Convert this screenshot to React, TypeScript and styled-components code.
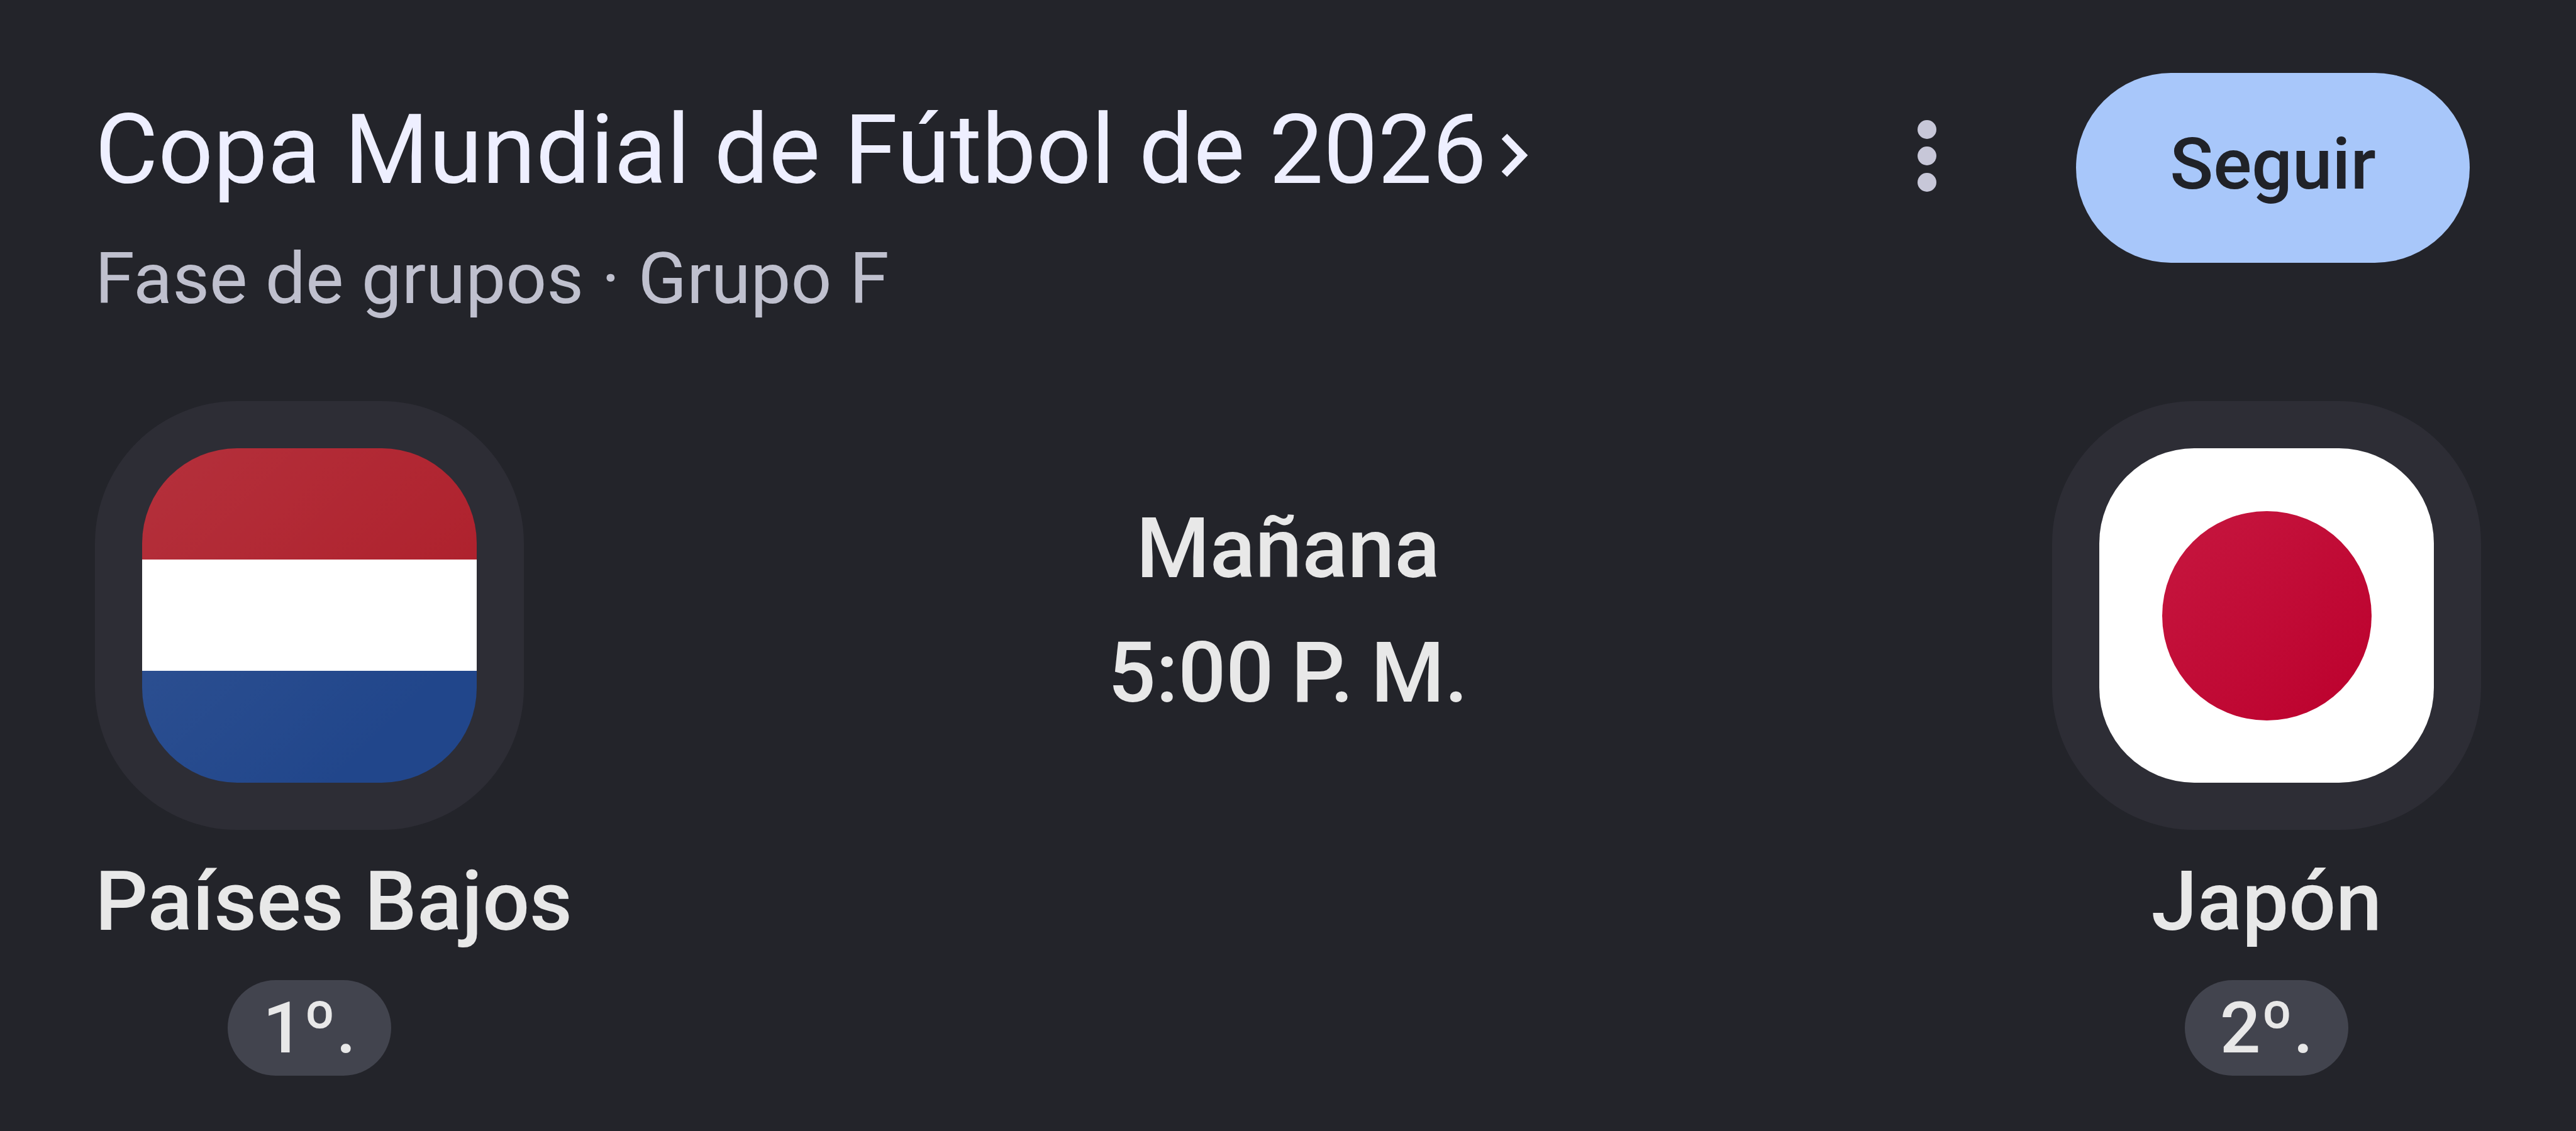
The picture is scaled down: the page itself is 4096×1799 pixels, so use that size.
import React from 'react';
import styled, { createGlobalStyle, css } from 'styled-components';

const colors = {
  page: '#23242a',
  tile: '#2d2d35',
  pill: '#42444e',
  accent: '#a8c7fa',
  onAccent: '#202228',
  title: '#eeefff',
  muted: '#bfc0ce',
  dots: '#c7c7d8',
  text: '#e8e8e8',
};

const GlobalStyle = createGlobalStyle`
  *, *::before, *::after { box-sizing: border-box; }
  body {
    margin: 0;
    background: ${colors.page};
    font-family: Roboto, "Liberation Sans", sans-serif;
  }
`;

const Card = styled.main`
  min-height: 100vh;
  padding: 116px 151px 87px;
  color: ${colors.text};
`;

const Header = styled.header`
  display: flex;
  justify-content: space-between;
  align-items: flex-start;
  margin-bottom: 127px;
`;

const Heading = styled.div`
  display: flex;
  flex-direction: column;
  gap: 44px;
  padding-top: 31px;
`;

const Title = styled.h1`
  margin: 0;
  font-size: 154px;
  font-weight: 400;
  line-height: 184px;
`;

const TitleLink = styled.a`
  display: inline-flex;
  align-items: center;
  gap: 24px;
  color: ${colors.title};
  text-decoration: none;
  white-space: nowrap;
`;

const Chevron = styled.svg`
  width: 44px;
  height: 72px;
  margin-top: 16px;
  fill: none;
  stroke: currentColor;
  stroke-width: 12;
`;

const Stage = styled.p`
  margin: 0;
  color: ${colors.muted};
  font-size: 114px;
  line-height: 136px;
`;

const Actions = styled.div`
  display: flex;
  align-items: flex-start;
  gap: 177px;
  padding-right: 18px;
`;

const MoreButton = styled.button`
  display: flex;
  align-items: center;
  justify-content: center;
  width: 120px;
  height: 264px;
  padding: 0;
  border: 0;
  background: none;
  color: ${colors.dots};
  cursor: pointer;
`;

const DotsIcon = styled.svg`
  width: 30px;
  height: 116px;
  fill: currentColor;
`;

const FollowButton = styled.button`
  width: 626px;
  height: 302px;
  padding: 0 0 12px;
  border: 0;
  border-radius: 151px;
  background: ${colors.accent};
  color: ${colors.onAccent};
  font-family: inherit;
  font-size: 114px;
  font-weight: 500;
  line-height: 136px;
  cursor: pointer;
`;

const Match = styled.section`
  display: grid;
  grid-template-columns: 682px 1fr 682px;
`;

const Team = styled.div`
  display: flex;
  flex-direction: column;
  align-items: center;
`;

const Tile = styled.div`
  width: 100%;
  aspect-ratio: 1;
  padding: 75px;
  border-radius: 226px;
  background: ${colors.tile};
`;

const flagStyles = {
  nl: css`
    background:
      linear-gradient(135deg, rgba(255, 255, 255, 0.08), transparent 80%),
      linear-gradient(#ae1f2b 0 33.3%, #ffffff 33.3% 66.6%, #21468b 66.6%);
  `,
  jp: css`
    background: #ffffff;
  `,
};

const Flag = styled.div<{ $country: 'nl' | 'jp' }>`
  display: flex;
  align-items: center;
  justify-content: center;
  height: 100%;
  border-radius: 151px;
  ${({ $country }) => flagStyles[$country]}
`;

const SunDisc = styled.div`
  width: 333px;
  height: 333px;
  border-radius: 50%;
  background: linear-gradient(135deg, #c6173f, #bc002d);
`;

const TeamName = styled.h2`
  width: 100%;
  margin: 34px 0 45px;
  font-size: 132px;
  font-weight: 500;
  line-height: 160px;
  text-align: center;
  white-space: nowrap;
`;

const Rank = styled.span`
  padding: 0 56px;
  border-radius: 76px;
  background: ${colors.pill};
  font-size: 114px;
  font-weight: 500;
  line-height: 152px;
`;

const Schedule = styled.div`
  display: flex;
  flex-direction: column;
  justify-content: center;
  height: 682px;
  padding-bottom: 14px;
  font-size: 134px;
  font-weight: 500;
  line-height: 198px;
  text-align: center;
`;

interface TeamCardProps {
  name: string;
  rank: string;
  country: 'nl' | 'jp';
}

function TeamCard({ name, rank, country }: TeamCardProps) {
  return (
    <Team>
      <Tile>
        <Flag $country={country}>{country === 'jp' && <SunDisc />}</Flag>
      </Tile>
      <TeamName>{name}</TeamName>
      <Rank>{rank}</Rank>
    </Team>
  );
}

export default function App() {
  return (
    <>
      <GlobalStyle />
      <Card>
        <Header>
          <Heading>
            <Title>
              <TitleLink href="#torneo">
                Copa Mundial de Fútbol de 2026
                <Chevron viewBox="0 0 44 72" aria-hidden="true">
                  <path d="M4 6 L33 36 L4 66" />
                </Chevron>
              </TitleLink>
            </Title>
            <Stage>Fase de grupos · Grupo F</Stage>
          </Heading>
          <Actions>
            <MoreButton type="button" aria-label="Más opciones">
              <DotsIcon viewBox="0 0 30 116" aria-hidden="true">
                <circle cx="15" cy="16" r="15" />
                <circle cx="15" cy="58" r="15" />
                <circle cx="15" cy="100" r="15" />
              </DotsIcon>
            </MoreButton>
            <FollowButton type="button">Seguir</FollowButton>
          </Actions>
        </Header>
        <Match>
          <TeamCard name="Países Bajos" rank="1º." country="nl" />
          <Schedule>
            <span>Mañana</span>
            <time>{'5:00\u2009P.\u2009M.'}</time>
          </Schedule>
          <TeamCard name="Japón" rank="2º." country="jp" />
        </Match>
      </Card>
    </>
  );
}
